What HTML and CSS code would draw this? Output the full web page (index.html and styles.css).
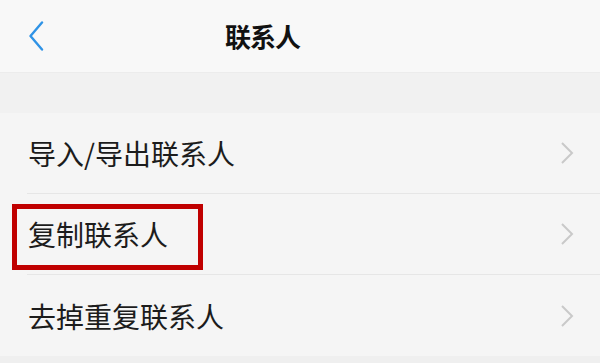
FILE: index.html
```html
<!DOCTYPE html>
<html lang="zh-CN">
<head>
<meta charset="utf-8">
<link rel="stylesheet" href="styles.css">
</head>
<body>
<div class="page">
  <header class="header">
    <svg class="back" width="16" height="30" viewBox="0 0 16 30"><path d="M14 1.5 L2.5 15 L14 28.5" fill="none" stroke="#2f93e6" stroke-width="2.4" stroke-linecap="round" stroke-linejoin="round"/></svg>
    <div class="title">联系人</div>
  </header>
  <div class="band"></div>
  <ul class="list">
    <li class="row"><span class="label">导入/导出联系人</span><svg class="chev" width="14" height="24" viewBox="0 0 14 24"><path d="M2 2 L12 12 L2 22" fill="none" stroke="#c9c9c9" stroke-width="2"/></svg></li>
    <li class="row highlighted"><span class="label">复制联系人</span><svg class="chev" width="14" height="24" viewBox="0 0 14 24"><path d="M2 2 L12 12 L2 22" fill="none" stroke="#c9c9c9" stroke-width="2"/></svg><span class="mark"></span></li>
    <li class="row"><span class="label">去掉重复联系人</span><svg class="chev" width="14" height="24" viewBox="0 0 14 24"><path d="M2 2 L12 12 L2 22" fill="none" stroke="#c9c9c9" stroke-width="2"/></svg></li>
  </ul>
  <div class="foot"></div>
</div>
</body>
</html>
```
FILE: styles.css
```css
* { box-sizing: border-box; }
html, body { margin: 0; padding: 0; }
body {
  width: 600px;
  height: 363px;
  overflow: hidden;
  background: #f5f5f5;
  font-family: "Noto Sans CJK SC", "Noto Sans", sans-serif;
  color: #1c1c1c;
}
.page { display: flex; flex-direction: column; height: 363px; }
.header {
  height: 73px;
  background: #f8f8f8;
  display: flex;
  align-items: center;
  padding-left: 28px;
  border-bottom: 1px solid #ececec;
}
.back { display: block; margin-top: -1px; }
.title {
  margin-left: 181px;
  font-size: 26px;
  font-weight: bold;
  color: #111;
  letter-spacing: -1px;
  line-height: 1;
}
.band { height: 40px; background: #f1f1f1; }
.list {
  list-style: none;
  margin: 0;
  padding: 0 0 0 27px;
  background: #f5f5f5;
}
.row {
  position: relative;
  height: 81px;
  display: flex;
  align-items: center;
  justify-content: space-between;
  padding-right: 26px;
  border-bottom: 1px solid #e6e6e6;
}
.row:last-child { border-bottom: none; height: 81px; }
.label { font-size: 28px; line-height: 1; padding-left: 1px; }
.chev { display: block; }
.mark {
  position: absolute;
  left: -15px;
  top: 10px;
  width: 191px;
  height: 66px;
  border: 5px solid #c00000;
}
.foot { flex: 1; background: #efefef; }
```
